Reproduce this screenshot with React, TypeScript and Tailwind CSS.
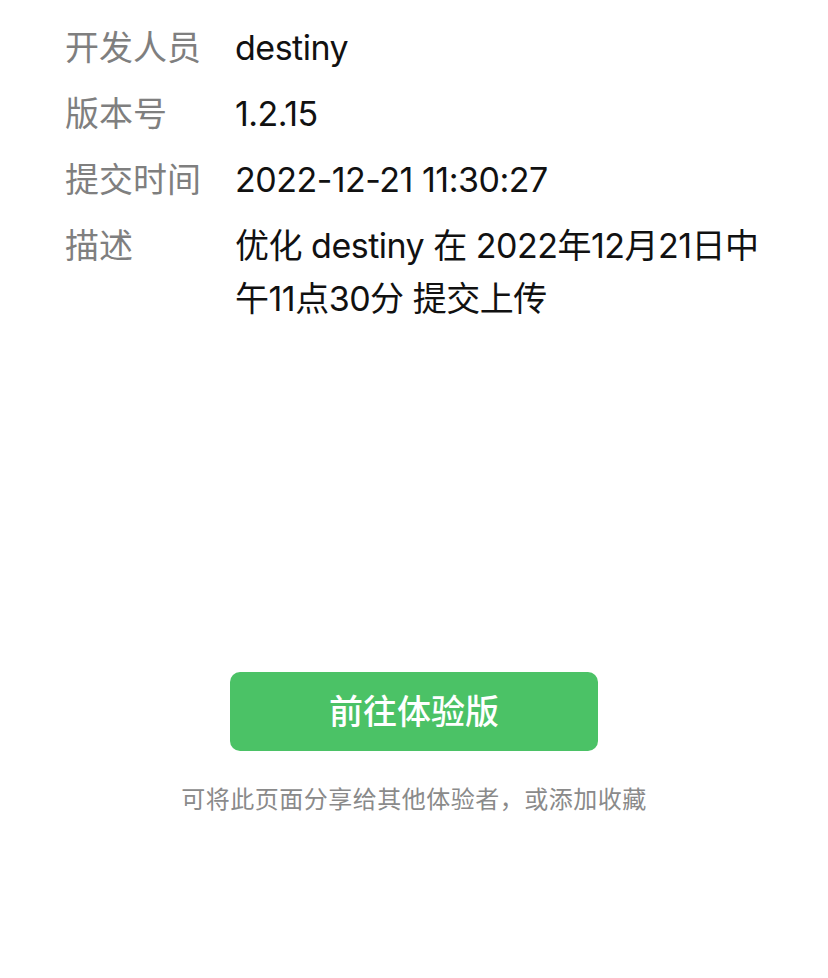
import * as React from "react";

const rows: { label: string; value: string }[] = [
  { label: "开发人员", value: "destiny" },
  { label: "版本号", value: "1.2.15" },
  { label: "提交时间", value: "2022-12-21 11:30:27" },
  { label: "描述", value: "优化 destiny 在 2022年12月21日中午11点30分 提交上传" },
];

export default function App() {
  return (
    <div
      className="min-h-[978px] w-full bg-white flex flex-col"
      style={{ fontFamily: 'Inter, "Noto Sans CJK SC", sans-serif' }}
    >
      <div className="pl-[65px] pr-[48px] pt-[21px] flex flex-col gap-[13px]">
        {rows.map((r) => (
          <div key={r.label} className="flex text-[34px] leading-[53px]">
            <div className="w-[170px] shrink-0 text-[#7f7f7f]">{r.label}</div>
            <div className="flex-1 text-[#111111] tracking-[-0.5px]">{r.value}</div>
          </div>
        ))}
      </div>

      <div className="flex flex-col items-center mt-[347px]">
        <button className="w-[368px] h-[79px] rounded-[10px] bg-[#4bc266] text-white text-[34px] font-medium">
          前往体验版
        </button>
        <p className="mt-[33px] text-[24px] leading-[32px] tracking-[0.5px] text-[#8a8a8a]">
          可将此页面分享给其他体验者，或添加收藏
        </p>
      </div>
    </div>
  );
}
